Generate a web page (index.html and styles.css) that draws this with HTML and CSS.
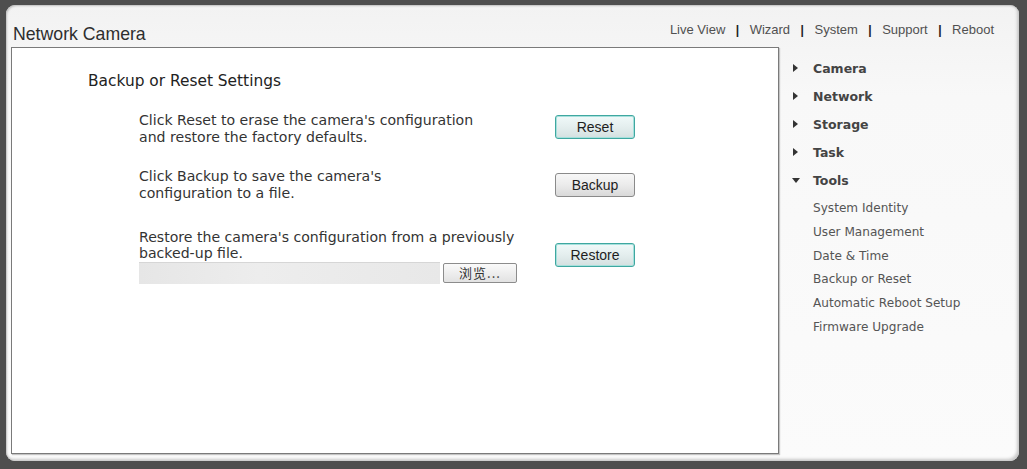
FILE: index.html
```html
<!DOCTYPE html>
<html>
<head>
<meta charset="utf-8">
<link rel="stylesheet" href="styles.css">
</head>
<body>
<div class="frame">
  <div class="panel">
    <div class="header">
      <div class="title">Network Camera</div>
      <nav class="nav">
        <a>Live View</a><span class="sep">|</span><a>Wizard</a><span class="sep">|</span><a>System</a><span class="sep">|</span><a>Support</a><span class="sep">|</span><a>Reboot</a>
      </nav>
    </div>
    <div class="body">
      <div class="main">
        <h2 class="heading">Backup or Reset Settings</h2>
        <div class="row">
          <div class="desc">Click Reset to erase the camera's configuration<br>and restore the factory defaults.</div>
          <button class="btn focus up">Reset</button>
        </div>
        <div class="row">
          <div class="desc">Click Backup to save the camera's<br>configuration to a file.</div>
          <button class="btn">Backup</button>
        </div>
        <div class="row row3">
          <div class="desc">Restore the camera's configuration from a previously<br>backed-up file.
            <div class="file"><span class="filebox"></span><span class="browse">浏览...</span></div>
          </div>
          <button class="btn focus up">Restore</button>
        </div>
      </div>
      <aside class="side">
        <div class="item"><span class="tri right"></span>Camera</div>
        <div class="item"><span class="tri right"></span>Network</div>
        <div class="item"><span class="tri right"></span>Storage</div>
        <div class="item"><span class="tri right"></span>Task</div>
        <div class="item"><span class="tri down"></span>Tools</div>
        <ul class="sub">
          <li>System Identity</li>
          <li>User Management</li>
          <li>Date &amp; Time</li>
          <li>Backup or Reset</li>
          <li>Automatic Reboot Setup</li>
          <li>Firmware Upgrade</li>
        </ul>
      </aside>
    </div>
  </div>
</div>
</body>
</html>
```

FILE: styles.css
```css
html, body {
  margin: 0;
  padding: 0;
}
body {
  width: 1027px;
  height: 469px;
  overflow: hidden;
  font-family: "DejaVu Sans", Verdana, sans-serif;
}
.frame {
  box-sizing: border-box;
  width: 1027px;
  height: 469px;
  background: #4e4e4e;
  padding: 5px 8px 8px 6px;
}
.panel {
  box-sizing: border-box;
  height: 100%;
  background: linear-gradient(#f2f2f2, #f8f8f8 20%, #fbfbfb);
  border-radius: 9px;
  box-shadow: inset 1px 1px 2px #bdbdbd, inset -2px -2px 3px #c8c8c8;
  padding: 0 0 0 5px;
  display: flex;
  flex-direction: column;
}
.header {
  height: 42px;
  display: flex;
  justify-content: space-between;
  align-items: flex-start;
  padding-right: 25px;
}
.title {
  font-family: "Liberation Sans", Arial, sans-serif;
  font-size: 17.7px;
  line-height: 18px;
  margin-top: 20px;
  padding-left: 2px;
  color: #2e2e2e;
}
.nav {
  margin-top: 17px;
  font-family: "Liberation Sans", Arial, sans-serif;
  font-size: 13px;
  line-height: 16px;
  color: #505050;
  display: flex;
}
.nav .sep {
  margin: 0 10.5px;
  color: #222;
  font-weight: bold;
  font-size: 12px;
}
.body {
  flex: 1;
  display: flex;
  min-height: 0;
}
.main {
  box-sizing: border-box;
  width: 768px;
  height: 407px;
  background: #fff;
  border: 1px solid #7a7a7a;
  box-shadow: 1px 1px 1px #c4c4c4;
  padding: 24px 0 0 0;
}
.heading {
  margin: 0 0 22px 76px;
  font-weight: normal;
  font-size: 15.4px;
  line-height: 18px;
  color: #222;
}
.row {
  display: flex;
  align-items: center;
  padding-left: 127px;
  margin-bottom: 22px;
}
.row3 {
  margin-top: 27px;
}
.desc {
  width: 416px;
  font-size: 14.1px;
  line-height: 17px;
  color: #333;
}
.row3 .desc {
  line-height: 16px;
}
.file {
  display: flex;
  align-items: center;
  margin-top: 1px;
}
.filebox {
  display: block;
  width: 301px;
  height: 21px;
  background: linear-gradient(90deg, #e6e6e6, #ededed 40%, #e8e8e8);
  border-top: 1px solid #d6d6d6;
}
.browse {
  box-sizing: border-box;
  margin-left: 3px;
  width: 74px;
  height: 20px;
  border: 1px solid #8c8c8c;
  border-radius: 2px;
  background: linear-gradient(#fafafa, #e2e2e2);
  font-family: "Noto Sans CJK SC", "DejaVu Sans", sans-serif;
  font-size: 13px;
  line-height: 18px;
  text-align: center;
  color: #333;
  letter-spacing: 1px;
}
.btn {
  box-sizing: border-box;
  width: 80px;
  height: 24px;
  padding: 0;
  border: 1px solid #8a8a8a;
  border-radius: 3px;
  background: linear-gradient(#f7f7f7, #ebebeb 50%, #d9d9d9);
  font-family: "Liberation Sans", Arial, sans-serif;
  font-size: 14px;
  color: #1e1e1e;
}
.btn.up {
  margin-bottom: 4px;
}
.btn.focus {
  border-color: #3fa7a0;
  box-shadow: inset 0 0 0 1px #a6e0dc;
  background: linear-gradient(#f0f9f9, #e4eeee 50%, #d4e0e0);
}
.side {
  flex: 1;
  padding: 7px 0 0 13px;
}
.item {
  display: flex;
  align-items: center;
  height: 28px;
  font-weight: bold;
  font-size: 12.5px;
  color: #444;
}
.tri {
  display: inline-block;
  width: 0;
  height: 0;
}
.tri.right {
  border-top: 4px solid transparent;
  border-bottom: 4px solid transparent;
  border-left: 5px solid #333;
  margin-left: 1px;
  margin-right: 15px;
}
.tri.down {
  border-left: 4px solid transparent;
  border-right: 4px solid transparent;
  border-top: 5px solid #333;
  margin-right: 13px;
}
.sub {
  list-style: none;
  margin: 2px 0 0 21px;
  padding: 0;
}
.sub li {
  height: 23.8px;
  line-height: 24px;
  font-size: 12.1px;
  color: #555;
}
```
